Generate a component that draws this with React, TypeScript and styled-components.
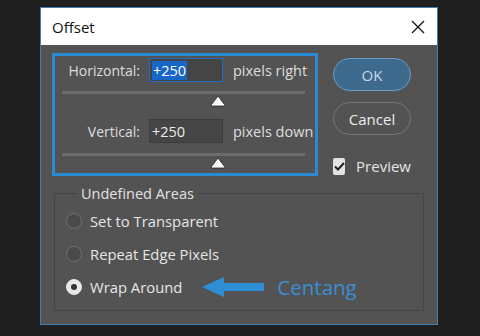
import styled, { createGlobalStyle } from 'styled-components';

const GlobalStyle = createGlobalStyle`
  html, body {
    margin: 0;
    padding: 0;
    background: #1f1f1f;
  }
  body {
    font-family: 'Open Sans', 'Noto Sans', sans-serif;
    width: 480px;
    height: 336px;
    overflow: hidden;
  }
`;

const Dialog = styled.div`
  margin: 7px 0 0 40px;
  width: 398px;
  height: 318px;
  box-sizing: border-box;
  border: 1px solid #3f7fb3;
  background: #535353;
  display: flex;
  flex-direction: column;
`;

const TitleBar = styled.div`
  height: 37px;
  flex: none;
  background: #ffffff;
  display: flex;
  align-items: center;
  justify-content: space-between;
  padding: 0 12px 0 11px;
`;

const Title = styled.span`
  font-size: 15px;
  color: #111;
`;

const CloseIcon = styled.svg`
  width: 14px;
  height: 14px;
`;

const Body = styled.div`
  padding: 8px 0 0 11px;
  display: flex;
  flex-direction: column;
`;

const TopRow = styled.div`
  display: flex;
  align-items: flex-start;
`;

const Highlight = styled.div`
  width: 266px;
  height: 123px;
  box-sizing: border-box;
  border: 3px solid #2b8bd2;
  padding-top: 2px;
  display: flex;
  flex-direction: column;
`;

const FieldRow = styled.div`
  display: grid;
  grid-template-columns: 85px 74px auto;
  column-gap: 9px;
  align-items: center;
  height: 24px;
`;

const Label = styled.span`
  font-size: 14px;
  color: #dedede;
  text-align: right;
`;

const Input = styled.div<{ $focused?: boolean }>`
  height: 24px;
  box-sizing: border-box;
  background: #454545;
  border: 1px solid ${(p) => (p.$focused ? '#1f6ec0' : '#3b3b3b')};
  display: flex;
  align-items: center;
  padding-left: 2px;
  font-size: 14.5px;
  color: #ececec;
`;

const Selected = styled.span`
  background: #1766c8;
  color: #ffffff;
  line-height: 19px;
  padding: 0 1px;
`;

const Unit = styled.span`
  margin-left: 1px;
  font-size: 14.5px;
  color: #dedede;
  white-space: nowrap;
`;

const Slider = styled.div<{ $gap: number }>`
  position: relative;
  margin: ${(p) => p.$gap}px 0 0 7px;
  width: 243px;
  height: 16px;
`;

const Track = styled.div`
  height: 3px;
  background: #6c6c6c;
`;

const Thumb = styled.svg`
  position: absolute;
  top: 4px;
  width: 16px;
  height: 12px;
  margin-left: -8px;
`;

const ButtonColumn = styled.div`
  margin-left: 15px;
  width: 78px;
  display: flex;
  flex-direction: column;
  padding-top: 5px;
`;

const Button = styled.div<{ $primary?: boolean }>`
  height: 33px;
  box-sizing: border-box;
  border-radius: 17px;
  border: 1.5px solid ${(p) => (p.$primary ? '#6b9ec8' : '#777777')};
  background: ${(p) => (p.$primary ? '#3e6a8e' : 'transparent')};
  color: ${(p) => (p.$primary ? '#c6d8e6' : '#ececec')};
  font-size: 15px;
  display: flex;
  align-items: center;
  justify-content: center;
  & + & {
    margin-top: 11px;
  }
`;

const CheckRow = styled.div`
  margin-top: 21px;
  display: flex;
  align-items: center;
  gap: 11px;
  font-size: 15px;
  color: #e4e4e4;
`;

const CheckBox = styled.div`
  width: 17px;
  height: 17px;
  border-radius: 2px;
  background: #e3e3e3;
  display: flex;
  align-items: center;
  justify-content: center;
`;

const Group = styled.fieldset`
  margin: 8px 0 0 2px;
  width: 370px;
  height: 127px;
  box-sizing: border-box;
  border: 1px solid #454545;
  padding: 10px 0 0 11px;
  display: flex;
  flex-direction: column;
  gap: 17px;
`;

const Legend = styled.legend`
  margin-left: 11px;
  padding: 0 4px;
  font-size: 14.5px;
  color: #e2e2e2;
`;

const RadioRow = styled.div`
  display: flex;
  align-items: center;
  height: 16px;
  font-size: 14.8px;
  color: #e6e6e6;
`;

const Radio = styled.div<{ $checked?: boolean }>`
  width: 16px;
  height: 16px;
  box-sizing: border-box;
  border-radius: 50%;
  border: 1.5px solid ${(p) => (p.$checked ? '#e8e8e8' : '#727272')};
  background: ${(p) => (p.$checked ? '#e8e8e8' : '#4a4a4a')};
  display: flex;
  align-items: center;
  justify-content: center;
  margin-right: 8px;
  &::after {
    content: '';
    width: 6px;
    height: 6px;
    border-radius: 50%;
    background: ${(p) => (p.$checked ? '#333' : 'transparent')};
  }
`;

const Arrow = styled.svg`
  margin-left: 20px;
  width: 62px;
  height: 20px;
`;

const Note = styled.span`
  margin-left: 13px;
  font-size: 20.5px;
  color: #3a8fd4;
`;

const SliderBar = ({ value, gap }: { value: number; gap: number }) => (
  <Slider $gap={gap}>
    <Track />
    <Thumb viewBox="0 0 16 12" style={{ left: `${value * 100}%` }}>
      <path d="M8 1 L14.4 9.4 Q15.2 11 13.4 11 L2.6 11 Q0.8 11 1.6 9.4 Z" fill="#ffffff" stroke="#222" strokeWidth="0.8" strokeLinejoin="round" />
    </Thumb>
  </Slider>
);

export default function App() {
  return (
    <>
      <GlobalStyle />
      <Dialog>
        <TitleBar>
          <Title>Offset</Title>
          <CloseIcon viewBox="0 0 14 14">
            <path d="M1 1 L13 13 M13 1 L1 13" stroke="#111" strokeWidth="1.3" />
          </CloseIcon>
        </TitleBar>
        <Body>
          <TopRow>
            <Highlight>
              <FieldRow>
                <Label>Horizontal:</Label>
                <Input $focused>
                  <Selected>+250</Selected>
                </Input>
                <Unit>pixels right</Unit>
              </FieldRow>
              <SliderBar value={0.64} gap={9} />
              <FieldRow style={{ marginTop: 12 }}>
                <Label>Vertical:</Label>
                <Input>+250</Input>
                <Unit>pixels down</Unit>
              </FieldRow>
              <SliderBar value={0.64} gap={10} />
            </Highlight>
            <ButtonColumn>
              <Button $primary>OK</Button>
              <Button>Cancel</Button>
              <CheckRow>
                <CheckBox>
                  <svg width="11" height="9" viewBox="0 0 11 9">
                    <path d="M1 4.5 L4 7.5 L10 1" fill="none" stroke="#222" strokeWidth="2" />
                  </svg>
                </CheckBox>
                Preview
              </CheckRow>
            </ButtonColumn>
          </TopRow>
          <Group>
            <Legend>Undefined Areas</Legend>
            <RadioRow>
              <Radio />
              Set to Transparent
            </RadioRow>
            <RadioRow>
              <Radio />
              Repeat Edge Pixels
            </RadioRow>
            <RadioRow>
              <Radio $checked />
              Wrap Around
              <Arrow viewBox="0 0 62 20">
                <path d="M0 10 L22 0 L22 6 L62 6 L62 14 L22 14 L22 20 Z" fill="#2f8fd6" />
              </Arrow>
              <Note>Centang</Note>
            </RadioRow>
          </Group>
        </Body>
      </Dialog>
    </>
  );
}
